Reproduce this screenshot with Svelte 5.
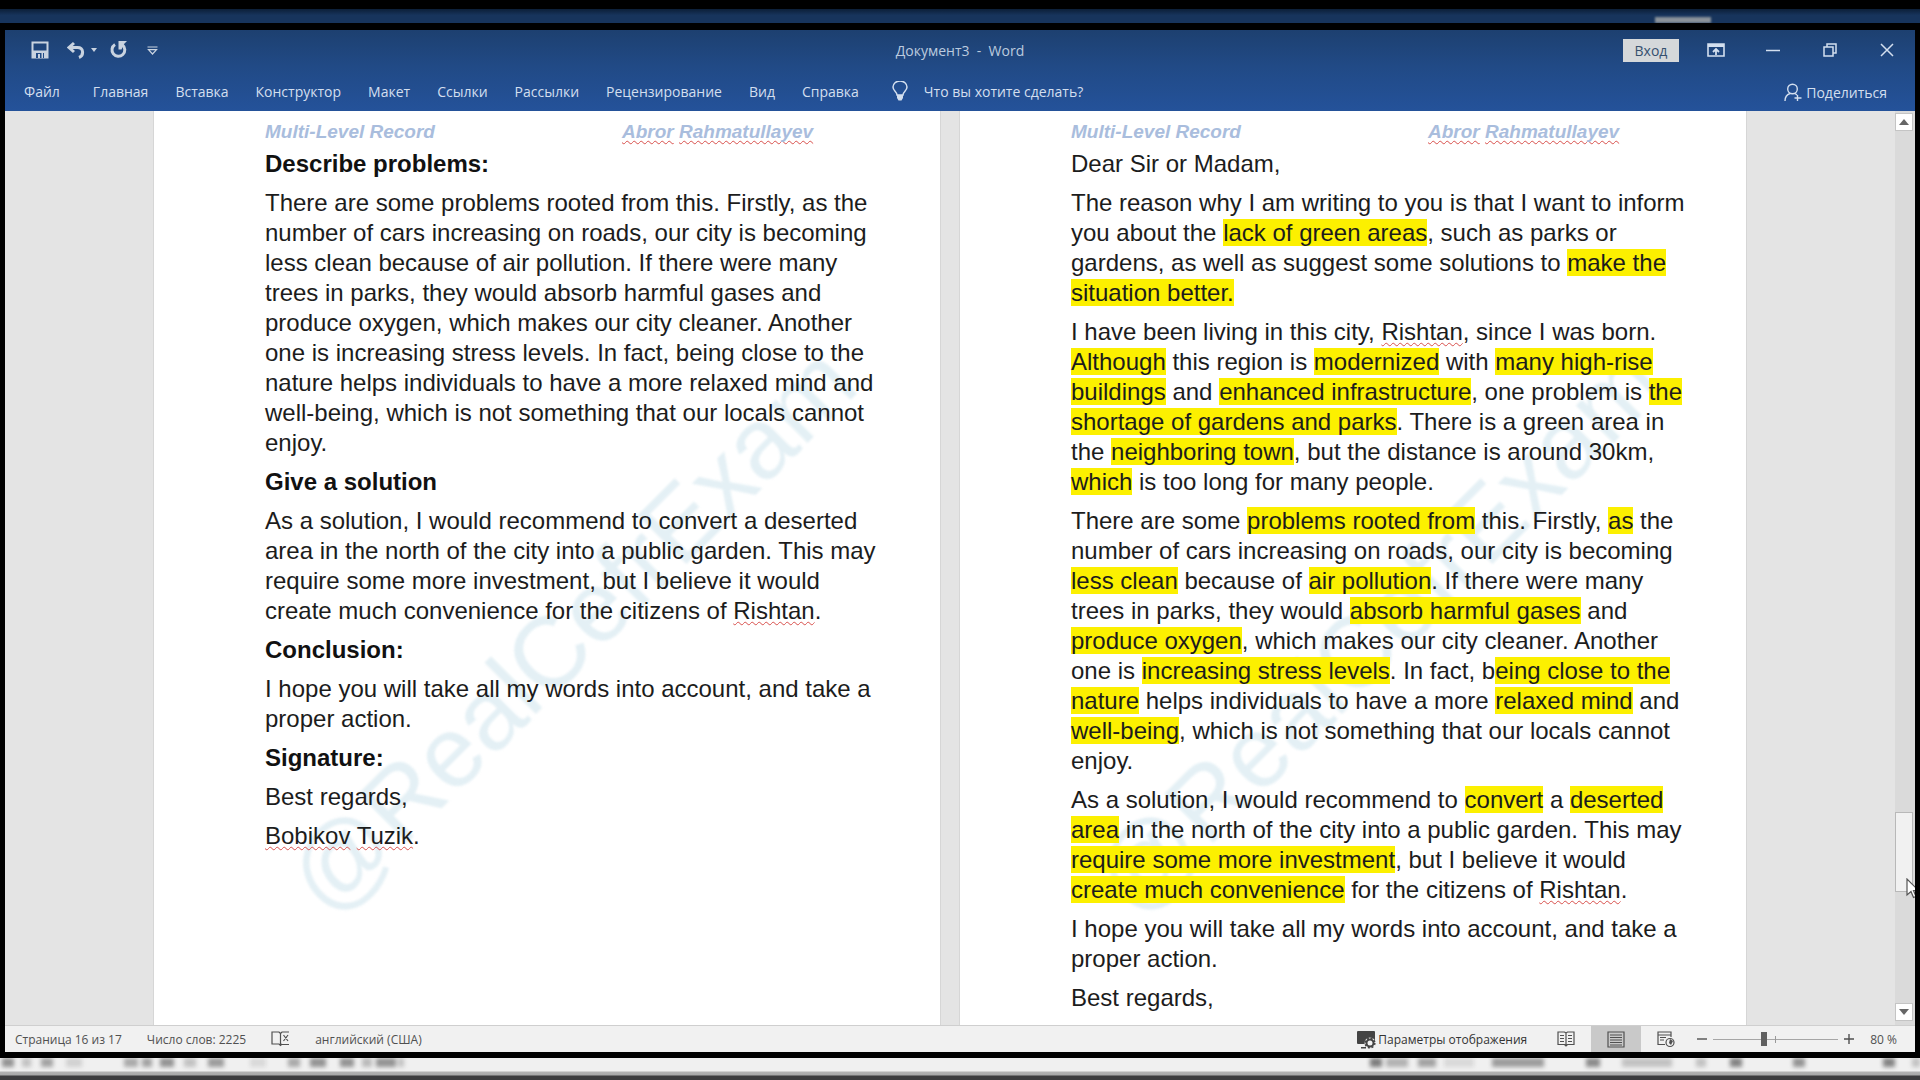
<script>
  const tabs = ['Файл', 'Главная', 'Вставка', 'Конструктор', 'Макет', 'Ссылки', 'Рассылки', 'Рецензирование', 'Вид', 'Справка'];

  // Inline marks: [highlighted], ~misspelled~
  const parse = (s) =>
    s.split(/(\[[^\]]*\]|~[^~]*~)/).filter(Boolean).map((t) =>
      t[0] === '[' ? { k: 'mark', t: t.slice(1, -1) } : t[0] === '~' ? { k: 'err', t: t.slice(1, -1) } : { k: 'text', t }
    );

  const pages = [
    [
      { h: 'Describe problems:' },
      { p: 'There are some problems rooted from this. Firstly, as the number of cars increasing on roads, our city is becoming less clean because of air pollution. If there were many trees in parks, they would absorb harmful gases and produce oxygen, which makes our city cleaner. Another one is increasing stress levels. In fact, being close to the nature helps individuals to have a more relaxed mind and well-being, which is not something that our locals cannot enjoy.' },
      { h: 'Give a solution' },
      { p: 'As a solution, I would recommend to convert a deserted area in the north of the city into a public garden. This may require some more investment, but I believe it would create much convenience for the citizens of ~Rishtan~.' },
      { h: 'Conclusion:' },
      { p: 'I hope you will take all my words into account, and take a proper action.' },
      { h: 'Signature:' },
      { p: 'Best regards,' },
      { p: '~Bobikov~ ~Tuzik~.' }
    ],
    [
      { p: 'Dear Sir or Madam,' },
      { p: 'The reason why I am writing to you is that I want to inform you about the [lack of green areas], such as parks or gardens, as well as suggest some solutions to [make the situation better.]' },
      { p: 'I have been living in this city, ~Rishtan~, since I was born. [Although] this region is [modernized] with [many high-rise buildings] and [enhanced infrastructure], one problem is [the shortage of gardens and parks]. There is a green area in the [neighboring town], but the distance is around 30km, [which] is too long for many people.' },
      { p: 'There are some [problems rooted from] this. Firstly, [as] the number of cars increasing on roads, our city is becoming [less clean] because of [air pollution]. If there were many trees in parks, they would [absorb harmful gases] and [produce oxygen], which makes our city cleaner. Another one is [increasing stress levels]. In fact, b[eing close to the nature] helps individuals to have a more [relaxed mind] and [well-being], which is not something that our locals cannot enjoy.' },
      { p: 'As a solution, I would recommend to [convert] a [deserted area] in the north of the city into a public garden. This may [require some more investment], but I believe it would [create much convenience] for the citizens of ~Rishtan~.' },
      { p: 'I hope you will take all my words into account, and take a proper action.' },
      { p: 'Best regards,' }
    ]
  ];

  // Soft shadows along the lower edge: x, width, opacity
  const smudges = [
    [2, 12, 0.6], [22, 9, 0.3], [41, 12, 0.5], [66, 16, 0.2], [124, 14, 0.45], [142, 10, 0.5], [160, 14, 0.6], [184, 12, 0.3], [208, 16, 0.55], [250, 16, 0.15],
    [288, 12, 0.45], [310, 16, 0.6], [340, 14, 0.6], [362, 10, 0.35], [376, 20, 0.6], [398, 6, 0.3],
    [1370, 12, 0.75], [1386, 22, 0.4], [1418, 18, 0.5], [1444, 30, 0.15], [1492, 52, 0.55], [1586, 14, 0.65], [1622, 50, 0.3], [1696, 10, 0.3], [1730, 12, 0.7], [1793, 12, 0.6], [1883, 12, 0.7], [1912, 8, 0.3]
  ];
  let zoom = $state(40);
</script>

<div class="screen">
  <div class="behind-top"><span class="glow"></span></div>

  <div class="window">
    <header>
      <div class="titlebar">
        <div class="quick">
          <button class="save" aria-label="Сохранить">
            <svg width="18" height="18" viewBox="0 0 18 18"><path d="M1.5 1.5h15v15h-15z" fill="none" stroke="currentColor" stroke-width="2" /><path d="M1 9.500h16V17H1z" fill="currentColor" /><path d="M5 12h8v5H5z" fill="#214a85" /><path d="M7 13h2v4H7zM10.500 12h1.500v5h-1.500z" fill="currentColor" /></svg>
          </button>
          <button class="undo" aria-label="Отменить">
            <svg width="18" height="18" viewBox="0 0 18 18"><path d="M7 2 2 6.500 7 11M3 6.500h7.500c6.500 0 6.500 8 1.500 10" fill="none" stroke="currentColor" stroke-width="3" /></svg>
          </button>
          <button class="caret" aria-label="Список отмены"><svg width="6" height="4" viewBox="0 0 6 4"><path d="M0 0h6L3 4z" fill="currentColor" /></svg></button>
          <button class="redo" aria-label="Повторить">
            <svg width="17" height="18" viewBox="0 0 17 18"><path d="M5 3.500A6.400 6.400 0 1 0 12.500 4" fill="none" stroke="currentColor" stroke-width="3" /><path d="M8.500 0H17l-3 3-2.500 5.500h-3z" fill="currentColor" /></svg>
          </button>
          <button class="more" aria-label="Настройка панели">
            <svg width="11" height="9" viewBox="0 0 11 9"><path d="M.5 1h10M1.500 3.700h8L5.500 8z" fill="none" stroke="currentColor" stroke-width="1.200" /></svg>
          </button>
        </div>
        <h1>Документ3 &nbsp;- &nbsp;Word</h1>
        <div class="controls">
          <button class="login">Вход</button>
          <button class="ctl" aria-label="Параметры ленты">
            <svg width="18" height="14" viewBox="0 0 18 14"><path d="M1 1h16v12H1z" fill="none" stroke="currentColor" stroke-width="1.600" /><path d="M1 1h16v3H1z" fill="currentColor" /><path d="M9 12V6.500M6 9l3-3 3 3" fill="none" stroke="currentColor" stroke-width="1.800" /></svg>
          </button>
          <button class="ctl" aria-label="Свернуть"><svg width="14" height="14" viewBox="0 0 14 14"><path d="M0 7.500h14" stroke="currentColor" stroke-width="1.500" /></svg></button>
          <button class="ctl" aria-label="Восстановить"><svg width="14" height="14" viewBox="0 0 14 14"><path d="M1 4h9v9H1zM4 4V1h9v9h-3" fill="none" stroke="currentColor" stroke-width="1.500" /></svg></button>
          <button class="ctl" aria-label="Закрыть"><svg width="14" height="14" viewBox="0 0 14 14"><path d="m1 1 12 12M13 1 1 13" stroke="currentColor" stroke-width="1.500" /></svg></button>
        </div>
      </div>
      <nav>
        {#each tabs as tab}<button class="tab">{tab}</button>{/each}
        <button class="tell">
          <svg width="16" height="20" viewBox="0 0 16 20"><path d="M5 14c0-3-4-4-4-8a7 6 0 0 1 14 0c0 4-4 5-4 8z" fill="none" stroke="currentColor" stroke-width="1.500" /><path d="M5 14h6v3l-1.500 2.500h-3L5 17z" fill="currentColor" /></svg>
          Что вы хотите сделать?
        </button>
        <button class="share">
          <svg width="18" height="19" viewBox="0 0 18 19"><circle cx="8.500" cy="6" r="4.800" fill="none" stroke="currentColor" stroke-width="1.400" /><path d="M1 18c0-4 2-6.500 5-7.500M11 10.500l2 1.500M13.500 12v6M10.500 15h7" fill="none" stroke="currentColor" stroke-width="1.400" /></svg>
          Поделиться
        </button>
      </nav>
    </header>

    <main>
      <div class="canvas">
        {#each pages as blocks}
          <article>
            <span class="watermark" aria-hidden="true">@RealCefrExam</span>
            <div class="page-head"><span>Multi-Level Record</span><span><u>Abror</u> <u>Rahmatullayev</u></span></div>
            <div class="text">
              {#each blocks as b}
                {#if b.h}<h2>{b.h}</h2>{:else}<p>{#each parse(b.p) as r}{#if r.k === 'mark'}<mark>{r.t}</mark>{:else if r.k === 'err'}<u>{r.t}</u>{:else}{r.t}{/if}{/each}</p>{/if}
              {/each}
            </div>
          </article>
        {/each}
      </div>
      <div class="scroll">
        <button aria-label="Вверх"><svg width="10" height="6" viewBox="0 0 10 6"><path d="M0 6h10L5 0z" fill="#666" /></svg></button>
        <div class="track">
          <div class="thumb">
            <svg class="cursor" width="14" height="21" viewBox="0 0 14 21"><path d="M1 1v16l4-3.500 2.500 6 2.500-1-2.500-6h5z" fill="#fff" stroke="#555" stroke-width="1.200" /></svg>
          </div>
        </div>
        <button aria-label="Вниз"><svg width="10" height="6" viewBox="0 0 10 6"><path d="M0 0h10L5 6z" fill="#666" /></svg></button>
      </div>
    </main>

    <footer>
      <button>Страница 16 из 17</button>
      <button>Число слов: 2225</button>
      <button class="proof" aria-label="Правописание">
        <svg width="19" height="16" viewBox="0 0 19 16"><path d="M9.500 2.500 8 1H1v12h7l1.500 1.500L11 13M9.500 2.500v12M9.500 2.500 11 1h7M11 13.500h7M12.500 4l4.500 6M17 4l-4.500 6" fill="none" stroke="currentColor" stroke-width="1.200" /></svg>
      </button>
      <button>английский (США)</button>
      <div class="views">
        <button class="display">
          <svg width="20" height="19" viewBox="0 0 20 19"><path d="M2 1h16q1 0 1 1v8H1V2q0-1 1-1zM1 10h9v4H2q-1 0-1-1zM5 17h5v1.500H5z" fill="#444" /><circle cx="14" cy="13" r="5.500" fill="#f1f1f1" /><circle cx="14" cy="13" r="3.500" fill="none" stroke="#444" stroke-width="2" /><circle cx="14" cy="13" r="4.800" fill="none" stroke="#444" stroke-width="1.600" stroke-dasharray="2 1.770" /></svg>
          Параметры отображения
        </button>
        <button class="view" aria-label="Режим чтения">
          <svg width="18" height="16" viewBox="0 0 18 16"><path d="M9 2 7.500 1H1v12.500h6.500L9 15l1.500-1.500H17V1h-6.500L9 2v13M3 4.500h4M3 7.500h4M3 10.500h4M11 4.500h4M11 7.500h4M11 10.500h4" fill="none" stroke="currentColor" stroke-width="1.200" /></svg>
        </button>
        <button class="view active" aria-label="Разметка страницы">
          <svg width="18" height="17" viewBox="0 0 18 17"><path d="M1 1h16v15H1zM3 4h12M3 6.500h12M3 9h12M3 11.500h12M3 14h12" fill="none" stroke="currentColor" stroke-width="1.200" /></svg>
        </button>
        <button class="view" aria-label="Веб-документ">
          <svg width="18" height="17" viewBox="0 0 18 17"><path d="M8 13.500H1V1h13v5M1 4h13M3 6.500h6M3 9h4" fill="none" stroke="currentColor" stroke-width="1.200" /><circle cx="13" cy="11.500" r="4" fill="#f1f1f1" stroke="currentColor" stroke-width="1.200" /><path d="m13 8 3 2-2 4-2-2z" fill="currentColor" /></svg>
        </button>
        <button class="step" aria-label="Уменьшить"><svg width="10" height="10" viewBox="0 0 10 10"><path d="M0 5h10" stroke="currentColor" stroke-width="1.400" /></svg></button>
        <input type="range" min="0" max="100" bind:value={zoom} aria-label="Масштаб" />
        <button class="step" aria-label="Увеличить"><svg width="10" height="10" viewBox="0 0 10 10"><path d="M0 5h10M5 0v10" stroke="currentColor" stroke-width="1.400" /></svg></button>
        <button class="percent">80 %</button>
      </div>
    </footer>
  </div>

  <div class="behind-bottom">
    <svg width="100%" height="18" viewBox="0 0 1920 18" preserveAspectRatio="none" aria-hidden="true">
      {#each smudges as [x, w, o]}<rect {x} y="-4" width={w} height="13" fill="#555" opacity={o} />{/each}
    </svg>
  </div>
</div>

<style>
  :global(body) { background: #000; overflow: hidden; }
  .screen {
    height: 100vh;
    display: flex;
    flex-direction: column;
    background: #000;
    font-family: 'Open Sans', 'Noto Sans', sans-serif;
  }
  button {
    border: 0;
    padding: 0;
    background: none;
    color: inherit;
    font: inherit;
    white-space: nowrap;
    display: flex;
    align-items: center;
    justify-content: center;
  }
  svg { display: block; flex: none; }

  .behind-top {
    height: 14px;
    margin: 9px 0 7px;
    flex: none;
    overflow: hidden;
    background: linear-gradient(#0c1f38, #17345c 45%);
    display: flex;
    justify-content: flex-end;
    align-items: flex-end;
    padding-right: 209px;
  }
  .glow { width: 56px; height: 6px; background: #8b929a; filter: blur(1px); }

  .window {
    flex: 1;
    min-height: 0;
    margin: 0 5px;
    display: flex;
    flex-direction: column;
    background: #e4e4e4;
  }
  header {
    flex: none;
    height: 81px;
    background: linear-gradient(#1d4070, #214a86 45%, #24529a);
    color: #d3dfef;
    font-size: 14px;
  }
  .titlebar {
    display: grid;
    grid-template-columns: 1fr auto 1fr;
    align-items: center;
    height: 40px;
  }
  .quick { display: flex; align-items: center; padding-left: 26px; color: #c9d3e0; }
  .undo { margin-left: 18px; }
  .caret { margin-left: 6px; }
  .redo { margin-left: 13px; }
  .more { margin-left: 20px; }
  h1 { margin: 0; font-size: 14px; font-weight: 400; color: #bccbdf; }
  .controls { display: flex; justify-content: flex-end; align-items: center; }
  .login { width: 56px; height: 23px; background: #d5d8da; color: #36506f; margin-right: 8px; }
  .ctl { width: 57px; height: 30px; }
  nav { display: flex; align-items: center; gap: 27px; height: 42px; padding: 0 28px 0 19px; }
  .tab:first-child { margin-right: 6px; }
  .tell { gap: 16px; margin-left: 6px; }
  .share { gap: 4px; margin-left: auto; padding-top: 2px; }

  main { flex: 1; min-height: 0; display: flex; overflow: hidden; }
  .canvas {
    flex: 1;
    display: grid;
    grid-template-columns: 1fr 1fr;
    gap: 18px;
    padding: 0 148px;
    overflow: hidden;
  }
  article {
    position: relative;
    z-index: 0;
    background: #fff;
    border: solid #d6d6d6;
    border-width: 0 1px;
    padding: 8px 50px 0 111px;
    font-family: 'Liberation Sans', Arial, sans-serif;
    color: #1c1c1c;
    overflow: hidden;
  }
  .watermark {
    position: absolute;
    z-index: -1;
    left: 53%;
    top: 519px;
    transform: translate(-50%, -50%) rotate(-45deg);
    font-size: 100px;
    line-height: 1;
    color: #e4f0f5;
    filter: blur(1px);
  }
  .page-head {
    display: grid;
    grid-template-columns: 357px auto;
    font-size: 19px;
    line-height: 26px;
    font-weight: 700;
    font-style: italic;
    color: #a9bddd;
  }
  u { text-decoration: underline wavy #d8504c 1px; text-underline-offset: 2px; text-decoration-skip-ink: none; }
  .text { font-size: 24px; line-height: 30px; padding-top: 4px; }
  h2, p { margin: 0 0 9px; font-size: 24px; }
  h2 { color: #111; }
  mark { background: #fcf000; color: inherit; }

  .scroll { width: 18px; display: flex; flex-direction: column; padding: 2px 2px 4px 0; background: #dadada; }
  .scroll button { height: 18px; background: #fff; border: 1px solid #c4c4c4; flex: none; }
  .track { flex: 1; display: flex; flex-direction: column; }
  .track::before { content: ''; flex: 683; }
  .track::after { content: ''; flex: 111; }
  .thumb { position: relative; flex: 78; background: #f1f1f1; border: 1px solid #b8b8b8; }
  .cursor { position: absolute; left: 10px; bottom: -8px; }

  footer {
    flex: none;
    height: 27px;
    border-top: 1px solid #cfcfcf;
    box-sizing: border-box;
    background: #f1f1f1;
    color: #505050;
    font-size: 12px;
    display: flex;
    align-items: center;
    gap: 25px;
    padding: 0 18px 0 10px;
  }
  .views { margin-left: auto; display: flex; align-items: center; align-self: stretch; }
  .display { gap: 2px; margin-right: 14px; color: #333; }
  .view { width: 50px; align-self: stretch; }
  .active { background: #c9c9c9; }
  .step { width: 10px; margin: 0 6px; }
  input {
    appearance: none;
    width: 125px;
    height: 14px;
    margin: 0;
    background:
      linear-gradient(#999, #999) 50% 50% / 1px 7px no-repeat,
      linear-gradient(#a6a6a6, #a6a6a6) 0 50% / 100% 1px no-repeat;
  }
  input::-webkit-slider-thumb { appearance: none; width: 6px; height: 14px; background: #606060; }
  .percent { margin-left: 10px; }

  .behind-bottom {
    flex: none;
    height: 22px;
    margin-top: 6px;
    overflow: hidden;
    background: linear-gradient(#f0f0f0 13px, #b2b2b2 14px, #a8a8a8 17px, #3c3c3e 18px);
  }
  .behind-bottom svg { filter: blur(2px); }
</style>
